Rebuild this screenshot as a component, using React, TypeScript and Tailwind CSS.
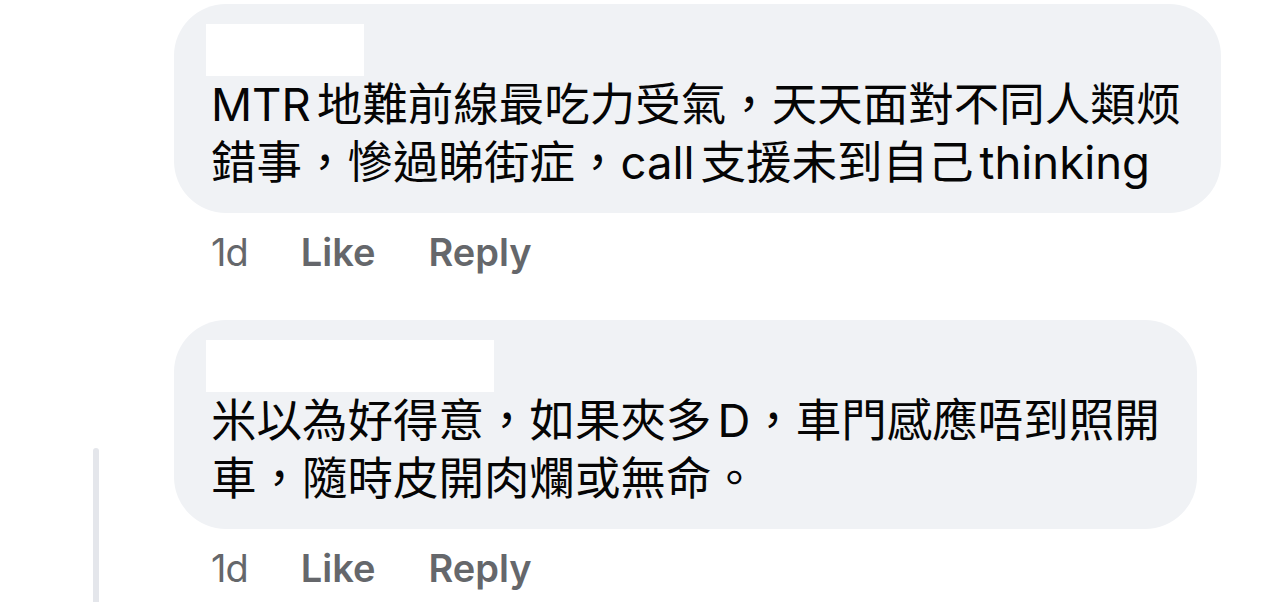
const cjk = "font-['Inter','Noto_Sans_CJK_TC',sans-serif]";

type CommentProps = {
  nameWidth: string;
  lines: React.ReactNode[];
  bubbleWidth: string;
};

// small gap between latin and CJK runs, narrower than a normal space
const Gap = () => <span className="inline-block w-[6px]" />;

function Comment({ nameWidth, lines, bubbleWidth }: CommentProps) {
  return (
    <div className="flex flex-col">
      <div className={`${bubbleWidth} rounded-[52px] bg-[#f0f2f5] pl-[32px] pr-[20px] pt-[20px] pb-[21px]`}>
        <div className={`${nameWidth} h-[52px] bg-white`} />
        <div className={`${cjk} text-[45.5px] leading-[58px] text-[#050505] pl-[5px]`}>
          {lines.map((l, i) => (
            <div key={i} className="whitespace-nowrap">
              {l}
            </div>
          ))}
        </div>
      </div>
      <div className="flex items-center gap-[53px] pl-[37px] h-[80px] pb-[2px] font-['Inter',sans-serif] text-[38px] text-[#65676b]">
        <span className="font-normal tracking-[-1px]">1d</span>
        <span className="font-semibold">Like</span>
        <span className="font-semibold">Reply</span>
      </div>
    </div>
  );
}

export default function App() {
  return (
    <div className="flex w-[1284px] h-[602px] overflow-hidden bg-white">
      <div className="w-[174px] flex flex-col pt-[448px]">
        <div className="ml-[93px] w-[6px] flex-1 rounded-t-full bg-[#e4e6eb]" />
      </div>
      <div className="flex flex-col pt-[4px] gap-[27px]">
        <Comment
          bubbleWidth="w-[1047px]"
          nameWidth="w-[158px]"
          lines={[
            <>MTR<Gap />地難前線最吃力受氣，天天面對不同人類烦</>,
            <>錯事，慘過睇街症，call<Gap />支援未到自己<Gap />thinking</>,
          ]}
        />
        <Comment
          bubbleWidth="w-[1023px]"
          nameWidth="w-[288px]"
          lines={[
            <>米以為好得意，如果夾多<Gap />D，車門感應唔到照開</>,
            <>車，隨時皮開肉爛或無命。</>,
          ]}
        />
      </div>
    </div>
  );
}
